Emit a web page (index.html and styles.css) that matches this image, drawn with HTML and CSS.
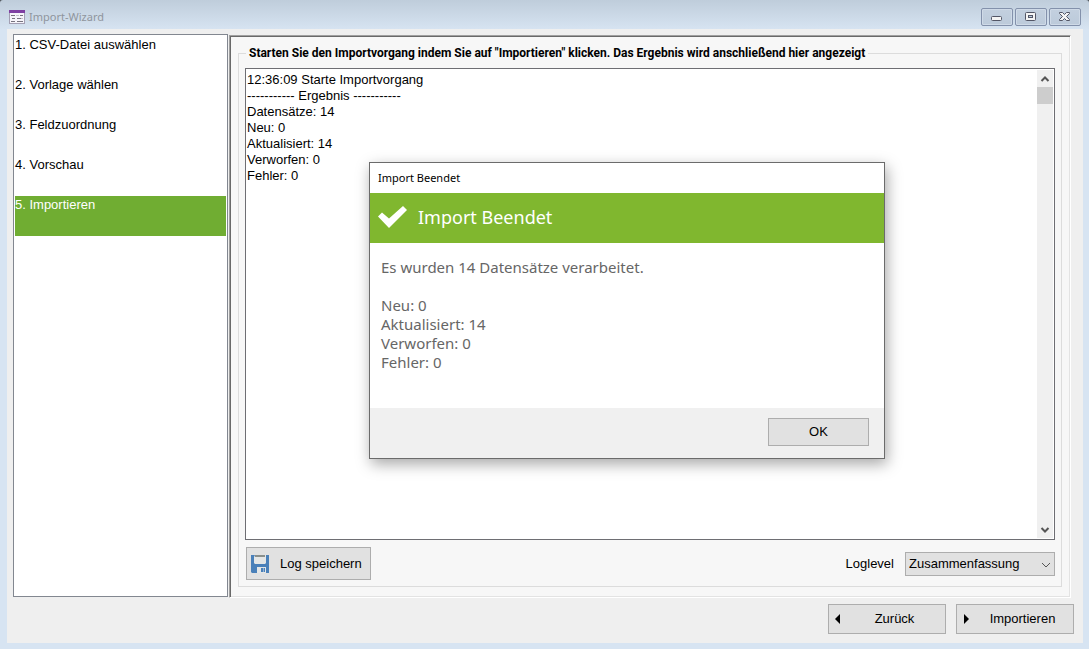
FILE: index.html
```html
<!DOCTYPE html>
<html lang="de">
<head>
    <meta charset="UTF-8">
    <meta name="viewport" content="width=device-width, initial-scale=1.0">
    <title>Import-Wizard</title>
    <link rel="stylesheet" href="styles.css">
</head>
<body>
    <div class="window">
        <!-- Title bar -->
        <header class="titlebar">
            <svg class="app-icon" width="16" height="14" viewBox="0 0 16 14">
                <rect x="0.5" y="0.5" width="15" height="13" fill="#f6f4fa" stroke="#a39fb3"/>
                <rect x="0" y="0" width="16" height="3" fill="#7f3fa3"/>
                <path d="M2 5.5h4M3 8.5h3M2 11.5h4M11 5.5h3M8 8.5h4M8 11.5h6" stroke="#77737f"/>
                <path d="M7 5.5h3M12 8.5h2" stroke="#c3bfca"/>
            </svg>
            <h1 class="window-title">Import-Wizard</h1>
            <div class="window-controls">
                <button class="control" aria-label="Minimieren">
                    <svg width="12" height="10" viewBox="0 0 12 10"><rect x="0.5" y="4.5" width="10" height="4" rx="1" fill="#f4f4f4" stroke="#535666"/></svg>
                </button>
                <button class="control" aria-label="Maximieren">
                    <svg width="12" height="10" viewBox="0 0 12 10"><rect x="0.5" y="0.5" width="10" height="8" rx="1" fill="#f4f4f4" stroke="#535666"/><rect x="3.5" y="3.5" width="4" height="2" fill="#b9c9dc" stroke="#535666"/></svg>
                </button>
                <button class="control" aria-label="Schließen">
                    <svg width="12" height="10" viewBox="0 0 12 10"><path d="M0.5 0.5h3l2 2 2-2h3v1l-3 3 3 3v1h-3l-2-2-2 2h-3v-1l3-3-3-3z" fill="#f4f4f4" stroke="#535666" stroke-linejoin="round"/></svg>
                </button>
            </div>
        </header>

        <main class="client">
            <div class="content">
                <ol class="steps">
                    <li class="step">1. CSV-Datei auswählen</li>
                    <li class="step">2. Vorlage wählen</li>
                    <li class="step">3. Feldzuordnung</li>
                    <li class="step">4. Vorschau</li>
                    <li class="step active">5. Importieren</li>
                </ol>

                <section class="panel">
                    <fieldset class="group">
                        <legend>Starten Sie den Importvorgang indem Sie auf "Importieren" klicken. Das Ergebnis wird anschließend hier angezeigt</legend>
                        <div class="group-body">
                            <div class="log">
                                <textarea class="log-text" aria-label="Ergebnis" readonly>12:36:09 Starte Importvorgang
----------- Ergebnis -----------
Datensätze: 14
Neu: 0
Aktualisiert: 14
Verworfen: 0
Fehler: 0</textarea>
                                <div class="scrollbar">
                                    <svg class="arrow" width="16" height="17" viewBox="0 0 16 17"><path d="M4.5 11L8 7.5l3.5 3.5" fill="none" stroke="#555" stroke-width="2"/></svg>
                                    <div class="thumb"></div>
                                    <svg class="arrow" width="16" height="17" viewBox="0 0 16 17"><path d="M4.5 7L8 10.5 11.5 7" fill="none" stroke="#555" stroke-width="2"/></svg>
                                </div>
                            </div>
                            <div class="log-tools">
                                <button class="btn save">
                                    <svg width="18" height="18" viewBox="0 0 18 18">
                                        <path d="M0 0h18v18H1l-1-1z" fill="#4a80b9"/>
                                        <path d="M4 0h11v8l-1 1H4L3 8V2z" fill="#e4e6e6"/>
                                        <path d="M4 0h10v2H4z" fill="#8a8f8c"/>
                                        <path d="M6 12h9v6H6z" fill="#e4e6e6"/>
                                        <path d="M10 13h4v4h-4z" fill="#4a80b9"/>
                                        <path d="M12 13h1v4h-1z" fill="#94b3d4"/>
                                    </svg>
                                    <span>Log speichern</span>
                                </button>
                                <label for="loglevel">Loglevel</label>
                                <div class="select-wrap">
                                    <select id="loglevel" class="select">
                                        <option>Zusammenfassung</option>
                                    </select>
                                    <svg class="select-arrow" width="10" height="6" viewBox="0 0 10 6"><path d="M1 1l4 4 4-4" fill="none" stroke="#555"/></svg>
                                </div>
                            </div>
                        </div>
                    </fieldset>
                </section>
            </div>

            <!-- Wizard navigation -->
            <footer class="nav">
                <button class="btn nav-btn">
                    <svg width="6" height="10" viewBox="0 0 6 10"><path d="M5 0v10L0 5z"/></svg>
                    <span>Zurück</span>
                </button>
                <button class="btn nav-btn">
                    <svg width="6" height="10" viewBox="0 0 6 10"><path d="M1 0v10l5-5z"/></svg>
                    <span>Importieren</span>
                </button>
            </footer>
        </main>

        <!-- Result dialog -->
        <div class="dialog" role="dialog" aria-labelledby="dialog-title">
            <div class="dialog-caption">Import Beendet</div>
            <div class="dialog-header">
                <svg width="30" height="24" viewBox="0 0 30 24"><path d="M0 11.5l4-4 7 6L25 1l4 4-18 18z" fill="#fff"/></svg>
                <h2 id="dialog-title">Import Beendet</h2>
            </div>
            <div class="dialog-body">
                <p>Es wurden 14 Datensätze verarbeitet.</p>
                <p>Neu: 0<br>Aktualisiert: 14<br>Verworfen: 0<br>Fehler: 0</p>
            </div>
            <div class="dialog-footer">
                <button class="btn ok">OK</button>
            </div>
        </div>
    </div>
</body>
</html>
```
FILE: styles.css
```css
* {
    box-sizing: border-box;
}
html {
    background-color: #4c5258;
}
body {
    margin: 0;
    font-family: "Liberation Sans", Arial, sans-serif;
    font-size: 13px;
    line-height: 18px;
    color: #000;
}
button, select, textarea {
    font: inherit;
    color: inherit;
}
.window {
    position: relative; /* anchor for the dialog */
    display: flex;
    flex-direction: column;
    min-height: 100vh;
    padding: 0 6px 6px 7px;
    background: linear-gradient(#bfcddb, #d7e4f2 30px);
    border-radius: 3px 3px 0 0;
}

/* Title bar */
.titlebar {
    display: flex;
    align-items: center;
    height: 29px;
    padding: 5px 2px 0;
}
.window-title {
    margin: 0 0 0 4px;
    font-family: "Noto Sans", "Open Sans", sans-serif;
    font-size: 11px;
    font-weight: normal;
    color: #8f959d;
}
.window-controls {
    display: flex;
    gap: 2px;
    margin-left: auto;
}
.control {
    display: flex;
    align-items: center;
    justify-content: center;
    width: 32px;
    height: 18px;
    padding: 0;
    background: linear-gradient(#c3d0df, #bccada);
    border: 1px solid #8391ab;
    border-radius: 2px;
    box-shadow: inset 0 0 0 1px #cfdae7;
}

/* Client area */
.client {
    display: flex;
    flex: 1;
    flex-direction: column;
    padding: 5px 9px 9px 6px;
    background-color: #efefef;
}
.content {
    display: flex;
    flex: 1;
    gap: 1px;
    padding-right: 3px;
}
.steps {
    width: 215px;
    margin: 0 0 1px;
    padding: 1px;
    list-style: none;
    background-color: #fff;
    border: 1px solid #828790;
}
.step {
    height: 40px;
}
.active {
    color: #fff;
    background-color: #70ad32;
}
.panel {
    display: flex;
    flex: 1;
    margin-top: 1px;
    padding: 10px 8px;
    background-color: #f7f7f7;
    border: 1px solid;
    border-color: #a0a0a0 #fff #fff #a0a0a0;
    box-shadow: inset 1px 1px #696969, inset -1px -1px #e3e3e3;
}
.group {
    flex: 1;
    min-width: 0;
    margin: 0;
    padding: 0 6px 6px;
    border: 1px solid #dcdcdc;
}
.group legend {
    margin-left: 1px;
    padding: 0 3px;
    font-family: Roboto, "Liberation Sans", sans-serif;
    font-size: 12px;
    font-weight: bold;
    line-height: 14px;
}
.group-body {
    display: flex;
    flex-direction: column;
    gap: 7px;
    height: 100%;
    padding-top: 8px;
}
.log {
    display: flex;
    flex: 1;
    background-color: #fff;
    border: 1px solid #6e6e73;
}
.log-text {
    flex: 1;
    padding: 3px 1px;
    line-height: 16px;
    background: none;
    border: none;
    outline: none;
    resize: none;
    overflow: hidden;
}
.scrollbar {
    display: flex;
    flex-direction: column;
    width: 16px;
    margin: 1px 1px 1px 0;
    background-color: #f0f0f0;
}
.thumb {
    height: 17px;
    margin-bottom: auto;
    background-color: #cdcdcd;
}
.log-tools {
    display: flex;
    align-items: center;
    padding-left: 1px;
}
.log-tools label {
    margin-left: auto;
}

/* Buttons */
.btn {
    display: flex;
    align-items: center;
    padding: 0 9px;
    background-color: #e1e1e1;
    border: 1px solid #adadad;
}
.save {
    gap: 11px;
    height: 33px;
    padding: 0 8px 0 4px;
}
.select-wrap {
    position: relative;
    width: 150px;
    margin-left: 11px;
}
.select {
    width: 100%;
    height: 24px;
    padding: 0 3px;
    appearance: none;
    background-color: #e1e1e1;
    border: 1px solid #adadad;
    border-radius: 0;
}
.select-arrow {
    position: absolute;
    top: 10px;
    right: 4px;
    pointer-events: none;
}
.nav {
    display: flex;
    justify-content: flex-end;
    gap: 10px;
    padding-top: 6px;
}
.nav-btn {
    width: 118px;
    height: 30px;
    padding: 0 6px;
}
.nav-btn span {
    flex: 1;
    padding-left: 9px;
}

/* Dialog */
.dialog {
    position: absolute;
    top: 162px;
    left: 369px;
    width: 516px;
    background-color: #fff;
    border: 1px solid #6b6b6b;
    box-shadow: 2px 5px 14px rgba(0, 0, 0, 0.35);
}
.dialog-caption {
    padding: 0 8px;
    font-family: "Noto Sans", "Open Sans", sans-serif;
    font-size: 11px;
    line-height: 30px;
}
.dialog-header {
    display: flex;
    align-items: center;
    gap: 10px;
    height: 50px;
    padding: 0 8px 2px;
    color: #fff;
    background-color: #80b72f;
}
.dialog-header h2 {
    margin: 0;
    font-family: "Noto Sans", "Open Sans", sans-serif;
    font-size: 18px;
    font-weight: normal;
    line-height: 22px;
}
.dialog-body {
    height: 165px;
    padding: 15px 11px;
    font-family: "Noto Sans", "Open Sans", sans-serif;
    font-size: 15px;
    line-height: 19px;
    color: #666;
}
.dialog-body p {
    margin: 0 0 19px;
}
.dialog-footer {
    display: flex;
    justify-content: flex-end;
    padding: 10px 15px 12px;
    background-color: #f0f0f0;
}
.ok {
    justify-content: center;
    width: 101px;
    height: 28px;
}
```
